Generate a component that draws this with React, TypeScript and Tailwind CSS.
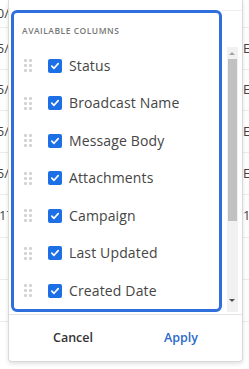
import React from "react";

const columns = [
  "Status",
  "Broadcast Name",
  "Message Body",
  "Attachments",
  "Campaign",
  "Last Updated",
  "Created Date",
];

const rows = [
  { h: "h-[28px]", left: "10/", right: "" },
  { h: "h-[42px]", left: "25/", right: "E" },
  { h: "h-[41px]", left: "25/", right: "E" },
  { h: "h-[42px]", left: "25/", right: "E" },
  { h: "h-[42px]", left: "25/", right: "E" },
  { h: "h-[43px]", left: "17", right: "1" },
  { h: "h-[42px]", left: "", right: "" },
  { h: "h-[42px]", left: "", right: "" },
];

function DragHandle() {
  return (
    <div className="grid grid-cols-2 gap-x-[2px] gap-y-[2px] w-[8px]">
      {Array.from({ length: 6 }).map((_, i) => (
        <span key={i} className="block w-[3px] h-[3px] rounded-[1px] bg-[#d3d3d3]" />
      ))}
    </div>
  );
}

function Checkbox() {
  return (
    <span className="flex items-center justify-center w-[14px] h-[14px] rounded-[2px] bg-[#1d6fe6]">
      <svg width="10" height="10" viewBox="0 0 10 10" fill="none">
        <path
          d="M1.8 5.2 L4 7.3 L8.2 2.6"
          stroke="white"
          strokeWidth="1.7"
          strokeLinecap="round"
          strokeLinejoin="round"
        />
      </svg>
    </span>
  );
}

function Scrollbar() {
  return (
    <div className="flex flex-col items-stretch w-[11px] h-[265px] bg-[#f1f1f1]">
      <div className="flex items-center justify-center h-[12px]">
        <span className="block w-0 h-0 border-l-[3px] border-r-[3px] border-b-[3px] border-l-transparent border-r-transparent border-b-[#a3a3a3]" />
      </div>
      <div className="h-[162px] mx-[1px] bg-[#c1c1c1]" />
      <div className="flex-1" />
      <div className="flex items-center justify-center h-[24px]">
        <span className="block w-0 h-0 border-l-[3px] border-r-[3px] border-t-[3px] border-l-transparent border-r-transparent border-t-[#505050]" />
      </div>
    </div>
  );
}

export default function App() {
  return (
    <div
      className="relative w-[249px] h-[369px] overflow-hidden bg-white text-[#444]"
      style={{ fontFamily: '"Open Sans", "Liberation Sans", sans-serif' }}
    >
      {/* table behind the popover */}
      <div className="flex flex-col">
        {rows.map((r, i) => (
          <div key={i} className={`${r.h} flex items-center justify-between border-b border-[#ececec] text-[13px]`}>
            <span
              className={
                r.left === "17"
                  ? "flex justify-start w-[9px] -ml-[1px] overflow-hidden whitespace-nowrap"
                  : "flex justify-end w-[9px] overflow-hidden whitespace-nowrap"
              }
            >
              {r.left}
            </span>
            <span className="w-[6px] overflow-hidden whitespace-nowrap">{r.right}</span>
          </div>
        ))}
      </div>

      {/* column picker popover */}
      <div className="absolute left-[8px] top-0 w-[235px] h-[362px] flex flex-col bg-white border border-t-0 border-[#d9d9d9] rounded-b-[4px] shadow-[0_2px_4px_rgba(0,0,0,0.12)]">
        <div className="flex h-[314px] pl-[2px] pt-[10px]">
          <div className="w-[211px] h-[302px] border-[3px] border-[#2e6fdc] rounded-[6px] overflow-hidden">
            <div className="h-[34px] pt-[12px] pl-[8px] text-[8.5px] leading-[12px] tracking-[0.06em] text-[#777] font-semibold">
              AVAILABLE COLUMNS
            </div>
            {columns.map((c) => (
              <div key={c} className="flex items-center h-[37.5px] pl-[10px]">
                <DragHandle />
                <div className="ml-[16px]">
                  <Checkbox />
                </div>
                <span className="ml-[7px] text-[14px] leading-[18px] tracking-[0.01em] text-[#454545]">{c}</span>
              </div>
            ))}
          </div>
          <div className="flex-1 flex flex-col items-center border-t border-[#eeeeee] pt-[36px]">
            <Scrollbar />
          </div>
        </div>
        <div className="flex flex-1 items-center border-t border-[#e4e4e4] pl-[10px] pr-[7px]">
          <button className="flex-1 text-center text-[12.5px] font-semibold text-[#333]">Cancel</button>
          <button className="flex-1 text-center text-[12.5px] font-semibold text-[#2a6bc9]">Apply</button>
        </div>
      </div>
    </div>
  );
}
